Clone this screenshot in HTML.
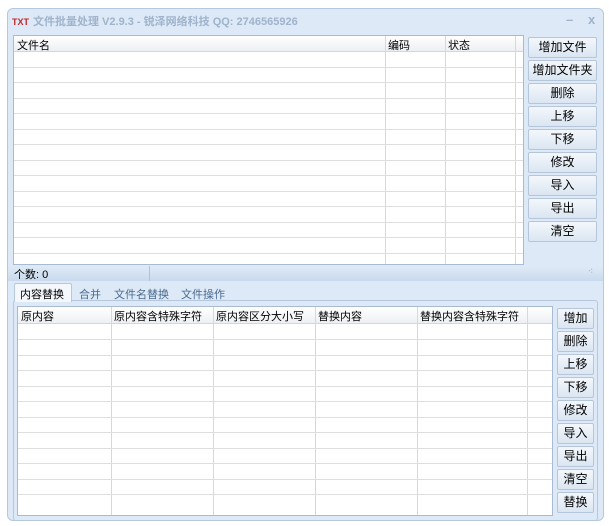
<!DOCTYPE html>
<html><head><meta charset="utf-8"><style>
*{margin:0;padding:0;box-sizing:border-box}
body{width:609px;height:526px;background:#fff;font-family:"Liberation Sans","Noto Sans CJK SC",sans-serif;font-size:12px;position:relative;overflow:hidden;color:#000}
.win{position:absolute;left:7px;top:8px;width:597px;height:513px;background:#dde9f6;border:1px solid #b6c8de;border-radius:6px}
.title{position:absolute;left:12px;top:13px;font-size:11px;font-weight:bold;color:#9fb3cc;white-space:nowrap}
.title b{color:#c0282a;font-size:9px;margin-right:4px}
.ctl{position:absolute;top:12px;color:#9fb3cc;font-size:13px;font-weight:bold}
.grid{position:absolute;background:#fff;border:1px solid #a9bbd0;overflow:hidden}
.hdr{position:absolute;left:0;right:0;top:0;background:linear-gradient(#fff,#eef0f3);border-bottom:1px solid #d6d6d6}
.hl{position:absolute;top:0;bottom:0;width:1px;background:#d8d8d8}
.rl{position:absolute;left:0;right:0;height:1px;background:#dedede}
.ht{position:absolute;top:1px;font-size:11px}
.btn{position:absolute;height:21px;border:1px solid #b5c6da;border-radius:2px;background:linear-gradient(#f3f7fb,#dbe6f2);text-align:center;line-height:19px;font-size:12px}
.panel{position:absolute;left:13px;top:300px;width:585px;height:221px;border:1px solid #b6c8de;border-radius:3px;background:#dde9f6}
.tab{position:absolute;top:286px;font-size:11px;color:#4a6a90}
</style></head><body>
<div class="win"></div>
<div class="title"><b>TXT</b>文件批量处理 V2.9.3 - 锐泽网络科技 QQ: 2746565926</div>
<div class="ctl" style="left:566px">–</div><div class="ctl" style="left:588px">x</div>

<div class="grid" style="left:13px;top:35px;width:511px;height:230px">
<div class="hdr" style="height:16px"></div>
<div class="hl" style="left:371px"></div><div class="hl" style="left:431px"></div><div class="hl" style="left:501px"></div>
<span class="ht" style="left:3px">文件名</span><span class="ht" style="left:374px">编码</span><span class="ht" style="left:434px">状态</span>
<div class="rl" style="top:31px"></div><div class="rl" style="top:46px"></div><div class="rl" style="top:62px"></div><div class="rl" style="top:77px"></div><div class="rl" style="top:93px"></div><div class="rl" style="top:108px"></div><div class="rl" style="top:124px"></div><div class="rl" style="top:139px"></div><div class="rl" style="top:155px"></div><div class="rl" style="top:170px"></div><div class="rl" style="top:186px"></div><div class="rl" style="top:201px"></div><div class="rl" style="top:217px"></div>
</div>

<div class="btn" style="left:528px;top:37px;width:69px">增加文件</div>
<div class="btn" style="left:528px;top:60px;width:69px">增加文件夹</div>
<div class="btn" style="left:528px;top:83px;width:69px">删除</div>
<div class="btn" style="left:528px;top:106px;width:69px">上移</div>
<div class="btn" style="left:528px;top:129px;width:69px">下移</div>
<div class="btn" style="left:528px;top:152px;width:69px">修改</div>
<div class="btn" style="left:528px;top:175px;width:69px">导入</div>
<div class="btn" style="left:528px;top:198px;width:69px">导出</div>
<div class="btn" style="left:528px;top:221px;width:69px">清空</div>

<div style="position:absolute;left:8px;top:266px;width:595px;height:15px;background:linear-gradient(#dfeaf6,#c9daee)"></div>
<div style="position:absolute;left:149px;top:266px;width:1px;height:15px;background:#b0c2d8"></div>
<div style="position:absolute;left:14px;top:266px;font-size:11px">个数: 0</div>
<div style="position:absolute;left:588px;top:266px;font-size:9px;color:#8aa">⁖</div>

<div class="panel"></div>
<div style="position:absolute;left:14px;top:283px;width:58px;height:19px;background:#f4f8fc;border:1px solid #b6c8de;border-bottom:none;border-radius:2px 2px 0 0"></div>
<div class="tab" style="left:20px;color:#000">内容替换</div>
<div class="tab" style="left:79px">合并</div>
<div class="tab" style="left:114px">文件名替换</div>
<div class="tab" style="left:181px">文件操作</div>

<div class="grid" style="left:17px;top:306px;width:536px;height:210px">
<div class="hdr" style="height:17px"></div>
<div class="hl" style="left:93px"></div><div class="hl" style="left:195px"></div><div class="hl" style="left:297px"></div><div class="hl" style="left:399px"></div><div class="hl" style="left:509px"></div>
<span class="ht" style="left:3px">原内容</span><span class="ht" style="left:96px">原内容含特殊字符</span><span class="ht" style="left:198px">原内容区分大小写</span><span class="ht" style="left:300px">替换内容</span><span class="ht" style="left:402px">替换内容含特殊字符</span>
<div class="rl" style="top:32px"></div><div class="rl" style="top:48px"></div><div class="rl" style="top:63px"></div><div class="rl" style="top:79px"></div><div class="rl" style="top:94px"></div><div class="rl" style="top:110px"></div><div class="rl" style="top:125px"></div><div class="rl" style="top:141px"></div><div class="rl" style="top:156px"></div><div class="rl" style="top:172px"></div><div class="rl" style="top:187px"></div>
</div>

<div class="btn" style="left:557px;top:308px;width:37px">增加</div>
<div class="btn" style="left:557px;top:331px;width:37px">删除</div>
<div class="btn" style="left:557px;top:354px;width:37px">上移</div>
<div class="btn" style="left:557px;top:377px;width:37px">下移</div>
<div class="btn" style="left:557px;top:400px;width:37px">修改</div>
<div class="btn" style="left:557px;top:423px;width:37px">导入</div>
<div class="btn" style="left:557px;top:446px;width:37px">导出</div>
<div class="btn" style="left:557px;top:469px;width:37px">清空</div>
<div class="btn" style="left:557px;top:492px;width:37px">替换</div>
</body></html>
